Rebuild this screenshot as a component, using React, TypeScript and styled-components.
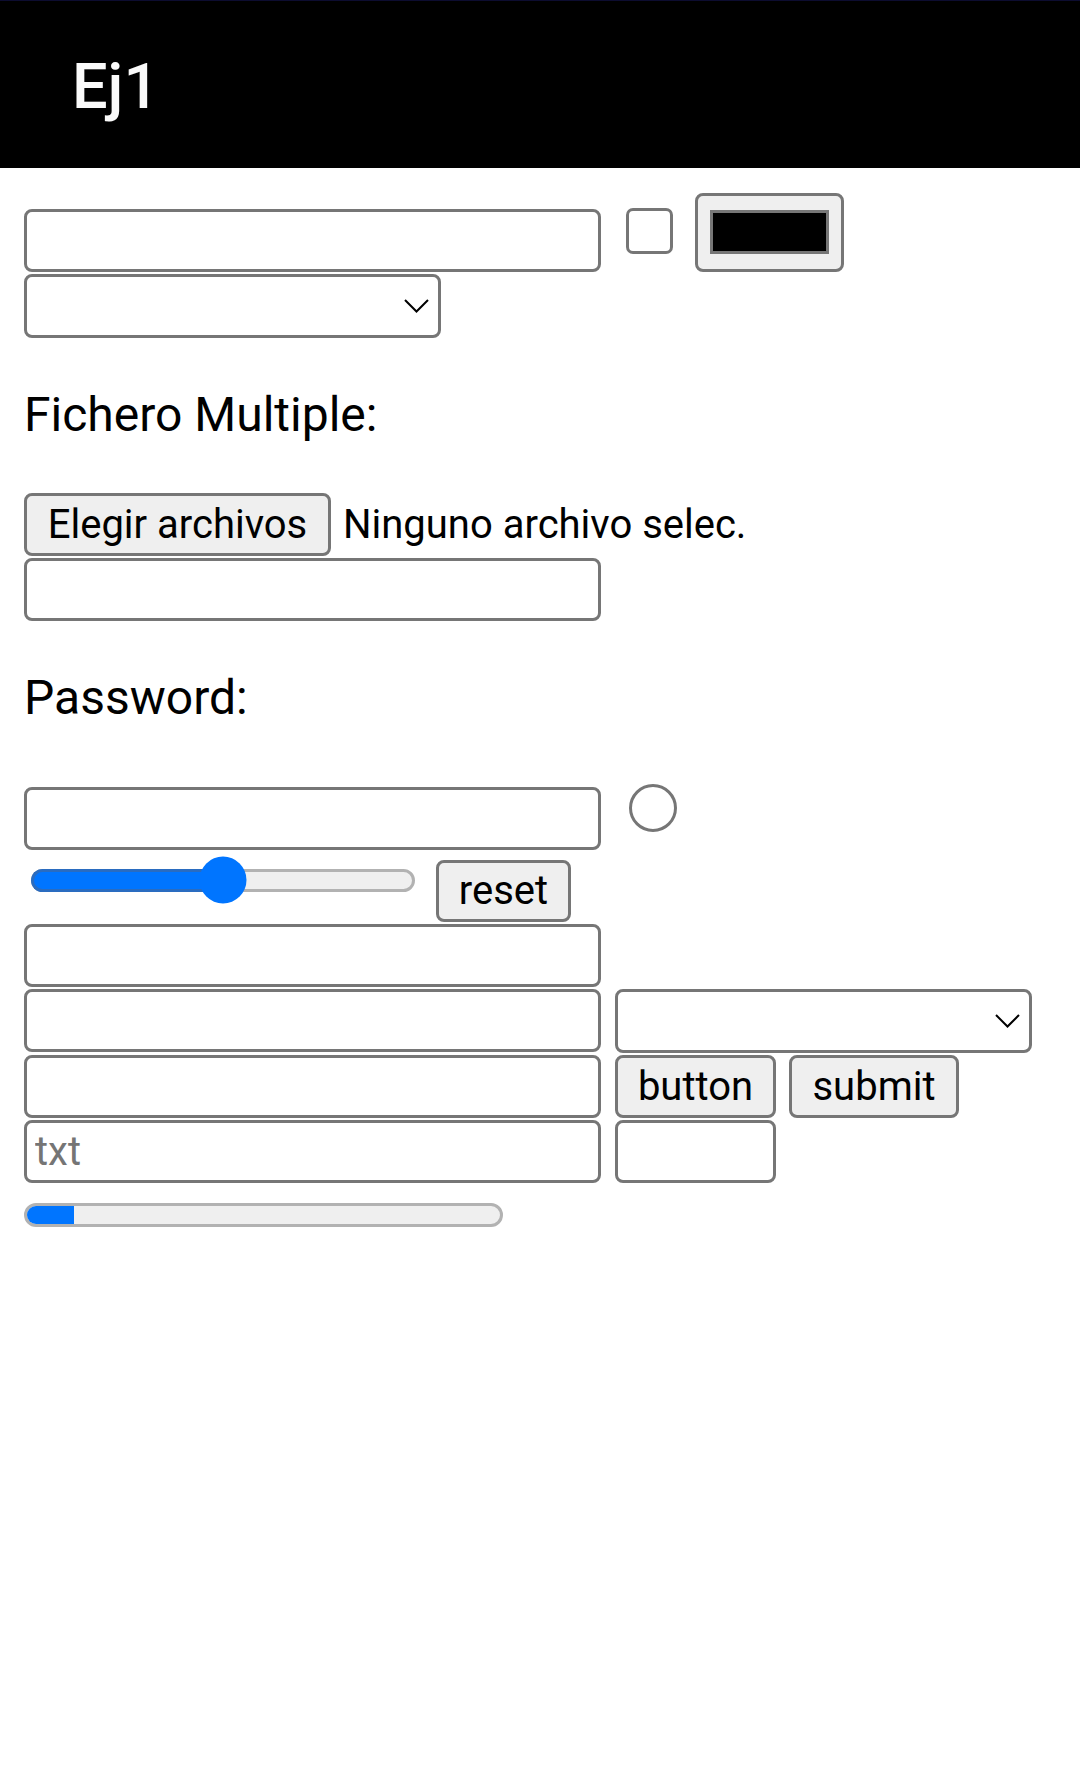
import React from "react";
import styled, { createGlobalStyle } from "styled-components";

const GlobalStyle = createGlobalStyle`
  html, body { margin: 0; padding: 0; background: #ffffff; }
  body { font-family: Roboto, "Noto Sans", "Liberation Sans", sans-serif; color: #000; }
  *, *::before, *::after { box-sizing: border-box; }
`;

const AppBar = styled.header`
  height: 168px;
  background: #000000;
  border-top: 1px solid #0c0c30;
  display: flex;
  align-items: center;
  padding: 4px 0 0 72px;
`;

const Title = styled.h1`
  margin: 0;
  font-family: Roboto, sans-serif;
  font-weight: 500;
  font-size: 63px;
  line-height: 74px;
  color: #fafafa;
`;

const Form = styled.form`
  display: flex;
  flex-direction: column;
  align-items: flex-start;
  gap: 2px;
  padding: 25px 24px 0;
`;

const Row = styled.div<{ $align?: string; $gap?: number }>`
  display: flex;
  align-items: ${(p) => p.$align || "flex-start"};
  gap: ${(p) => p.$gap ?? 0}px;
`;

const TextInput = styled.input<{ $w?: number; $mt?: number }>`
  appearance: none;
  width: ${(p) => p.$w ?? 577}px;
  height: 63px;
  margin: ${(p) => p.$mt ?? 0}px 0 0 0;
  padding: 0 8px;
  border: 3px solid #767676;
  border-radius: 8px;
  background: #ffffff;
  font-family: Roboto, sans-serif;
  font-size: 40px;
  color: #000;
  outline: none;
  &::placeholder { color: #757575; }
`;

const Checkbox = styled.input`
  appearance: none;
  width: 47px;
  height: 46px;
  margin: 0 0 18px 25px;
  border: 3px solid #767676;
  border-radius: 7px;
  background: #ffffff;
`;

const Radio = styled.input`
  appearance: none;
  width: 48px;
  height: 48px;
  margin: 8px 0 0 28px;
  border: 3px solid #767676;
  border-radius: 50%;
  background: #ffffff;
`;

const ColorWell = styled.div`
  width: 149px;
  height: 79px;
  margin-left: 22px;
  padding: 14px 12px 15px;
  border: 3px solid #767676;
  border-radius: 8px;
  background: #efefef;
`;

const Swatch = styled.div`
  width: 100%;
  height: 44px;
  border: 3px solid #767676;
  background: #000000;
`;

const SelectWrap = styled.div`
  position: relative;
  width: 417px;
  height: 64px;
`;

const Select = styled.select`
  appearance: none;
  width: 100%;
  height: 100%;
  margin: 0;
  border: 3px solid #767676;
  border-radius: 8px;
  background: #ffffff;
  font-family: Roboto, sans-serif;
  font-size: 40px;
`;

const Chevron = styled.svg`
  position: absolute;
  right: 12px;
  top: 50%;
  transform: translateY(-50%);
  pointer-events: none;
`;

const Label = styled.p`
  margin: 48px 0 49px 0;
  font-family: Roboto, sans-serif;
  font-size: 48px;
  line-height: 54px;
  color: #000;
`;

const Button = styled.button<{ $w: number; $h?: number; $mt?: number; $ml?: number }>`
  width: ${(p) => p.$w}px;
  height: ${(p) => p.$h ?? 63}px;
  margin: ${(p) => p.$mt ?? 0}px 0 0 ${(p) => p.$ml ?? 0}px;
  padding: 0;
  display: inline-flex;
  align-items: center;
  justify-content: center;
  border: 3px solid #767676;
  border-radius: 8px;
  background: #efefef;
  font-family: Roboto, sans-serif;
  font-size: 40px;
  line-height: 46px;
  color: #000;
  white-space: nowrap;
`;

const FileStatus = styled.span`
  margin-left: 12px;
  font-family: Roboto, sans-serif;
  font-size: 40px;
  line-height: 63px;
  color: #000;
  white-space: nowrap;
`;

const SliderBox = styled.div`
  position: relative;
  width: 384px;
  height: 56px;
  margin-left: 7px;
  display: flex;
  align-items: center;
`;

const Track = styled.div`
  position: relative;
  width: 100%;
  height: 23px;
  border: 3px solid #b2b2b2;
  border-radius: 12px;
  background: #efefef;
`;

const TrackFill = styled.div`
  position: absolute;
  left: -3px;
  top: -3px;
  bottom: -3px;
  border: 3px solid #2a6cc0;
  border-right: none;
  border-radius: 12px 0 0 12px;
  background: #0075ff;
`;

const Thumb = styled.div`
  position: absolute;
  top: 50%;
  width: 47px;
  height: 47px;
  border-radius: 50%;
  background: #0075ff;
  transform: translate(-50%, -50%);
`;

const Progress = styled.div`
  width: 479px;
  height: 24px;
  margin-top: 18px;
  border: 3px solid #b2b2b2;
  border-radius: 12px;
  background: #efefef;
  overflow: hidden;
`;

const ProgressFill = styled.div`
  height: 100%;
  background: #0075ff;
`;

const ChevronIcon = () => (
  <Chevron width="25" height="14" viewBox="0 0 25 14">
    <polyline points="1,1 12.5,12.5 24,1" fill="none" stroke="#000" strokeWidth="2" />
  </Chevron>
);

const SelectBox = () => (
  <SelectWrap>
    <Select defaultValue="">
      <option value=""></option>
    </Select>
    <ChevronIcon />
  </SelectWrap>
);

const Slider = ({ value }: { value: number }) => (
  <SliderBox>
    <Track>
      <TrackFill style={{ width: `calc(${value}% + 3px)` }} />
    </Track>
    <Thumb style={{ left: `${value}%` }} />
  </SliderBox>
);

export default function App() {
  const rangeValue = 50;
  const progressValue = 10;
  return (
    <>
      <GlobalStyle />
      <AppBar>
        <Title>Ej1</Title>
      </AppBar>
      <Form onSubmit={(e) => e.preventDefault()}>
        <Row $align="flex-end">
          <TextInput type="text" />
          <Checkbox type="checkbox" />
          <ColorWell>
            <Swatch />
          </ColorWell>
        </Row>
        <SelectBox />
        <Label>Fichero Multiple:</Label>
        <Row $align="center">
          <Button type="button" $w={307}>Elegir archivos</Button>
          <FileStatus>Ninguno archivo selec.</FileStatus>
        </Row>
        <TextInput type="text" />
        <Label>Password:</Label>
        <Row>
          <TextInput type="password" $mt={11} />
          <Radio type="radio" />
        </Row>
        <Row>
          <Slider value={rangeValue} />
          <Button type="reset" $w={135} $h={62} $mt={8} $ml={21}>reset</Button>
        </Row>
        <TextInput type="text" />
        <Row $gap={14}>
          <TextInput type="text" />
          <SelectBox />
        </Row>
        <Row $gap={14}>
          <TextInput type="text" />
          <Button type="button" $w={161}>button</Button>
          <Button type="submit" $w={170} $ml={-1}>submit</Button>
        </Row>
        <Row $gap={14}>
          <TextInput type="text" placeholder="txt" />
          <TextInput type="text" $w={161} />
        </Row>
        <Progress>
          <ProgressFill style={{ width: `${progressValue}%` }} />
        </Progress>
      </Form>
    </>
  );
}
